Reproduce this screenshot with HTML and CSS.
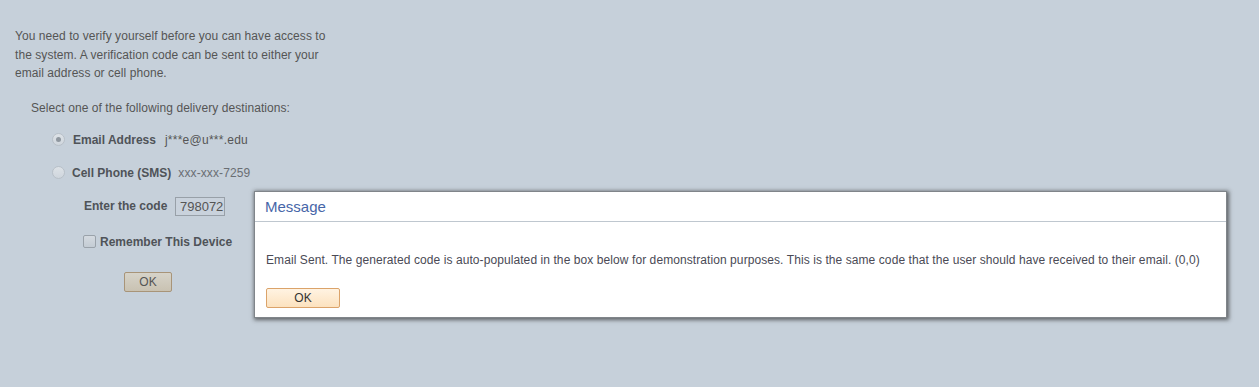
FILE: index.html
```html
<!DOCTYPE html>
<html>
<head>
<meta charset="utf-8">
<link rel="stylesheet" href="styles.css">
</head>
<body>
<div class="page">
  <p class="intro">You need to verify yourself before you can have access to the system. A verification code can be sent to either your email address or cell phone.</p>
  <div class="select">Select one of the following delivery destinations:</div>
  <div class="opt opt1">
    <span class="radio checked"><span class="dot"></span></span>
    <span class="lbl">Email Address</span>
    <span class="val">j***e@u***.edu</span>
  </div>
  <div class="opt opt2">
    <span class="radio"></span>
    <span class="lbl">Cell Phone (SMS)</span>
    <span class="val small">xxx-xxx-7259</span>
  </div>
  <div class="code-row">
    <span class="lbl">Enter the code</span>
    <span class="codebox">798072</span>
  </div>
  <div class="remember">
    <span class="check"></span>
    <span class="lbl">Remember This Device</span>
  </div>
  <div class="ok-row"><span class="btn-ok">OK</span></div>
</div>

<div class="modal">
  <div class="modal-head">Message</div>
  <div class="modal-body">
    <div class="modal-text">Email Sent. The generated code is auto-populated in the box below for demonstration purposes. This is the same code that the user should have received to their email. (0,0)</div>
    <span class="btn-modal">OK</span>
  </div>
</div>
</body>
</html>
```
FILE: styles.css
```css
html, body {
  margin: 0;
  padding: 0;
  background: #c6d0da;
  width: 1259px;
  height: 387px;
  overflow: hidden;
  font-family: Arial, "Liberation Sans", sans-serif;
  font-size: 12px;
  color: #555;
}
.page {
  padding: 27px 0 0 15px;
}
.intro {
  margin: 0;
  width: 320px;
  line-height: 18.5px;
  letter-spacing: 0.06px;
}
.select {
  margin: 17px 0 0 16px;
  line-height: 16px;
  letter-spacing: 0.07px;
}
.opt {
  display: flex;
  align-items: center;
  height: 16px;
}
.opt1 { margin: 16px 0 0 37px; }
.opt2 { margin: 17px 0 0 37px; }
.radio {
  width: 11px;
  height: 11px;
  border-radius: 50%;
  border: 1px solid #b8c0c8;
  background: linear-gradient(#dde2e7, #cfd6dd);
  display: flex;
  align-items: center;
  justify-content: center;
  margin-right: 8px;
}
.opt2 .radio { margin-right: 7px; }
.radio .dot {
  width: 5px;
  height: 5px;
  border-radius: 50%;
  background: #8f979f;
}
.lbl {
  font-weight: bold;
  color: #4f5358;
}
.val {
  margin-left: 9px;
  color: #555;
  letter-spacing: 0.25px;
}
.val.small {
  font-size: 12px;
  margin-left: 7px;
  color: #6a6e73;
  letter-spacing: 0.1px;
}
.code-row {
  display: flex;
  align-items: center;
  margin: 16px 0 0 69px;
  height: 19px;
}
.codebox {
  margin-left: 8px;
  width: 47px;
  height: 17px;
  border: 1px solid #98a0a8;
  background: #c9d2dc;
  font-size: 13px;
  line-height: 18px;
  color: #555;
  text-align: right;
  padding-right: 1px;
  box-sizing: content-box;
}
.remember {
  display: flex;
  align-items: center;
  margin: 18px 0 0 68px;
  height: 16px;
}
.check {
  width: 11px;
  height: 11px;
  border: 1px solid #9aa2aa;
  border-radius: 2px;
  background: linear-gradient(#d4dae0, #c4ccd4);
  margin-right: 4px;
}
.ok-row {
  margin: 22px 0 0 109px;
}
.btn-ok {
  display: inline-block;
  width: 46px;
  height: 18px;
  line-height: 18px;
  text-align: center;
  border: 1px solid #a89478;
  border-radius: 2px;
  background: linear-gradient(#d6d3c9, #c9c2b2);
  color: #555;
}
.modal {
  position: absolute;
  left: 254px;
  top: 191px;
  width: 971px;
  height: 125px;
  background: #fff;
  border: 1px solid #80858a;
  box-shadow: 1px 1px 4px 1px rgba(40, 40, 40, 0.65);
}
.modal-head {
  height: 29px;
  line-height: 30px;
  padding-left: 10px;
  font-size: 15px;
  color: #4766a8;
  border-bottom: 1px solid #bfc7cf;
}
.modal-body {
  padding: 30px 0 0 11px;
}
.modal-text {
  color: #4a4a55;
  line-height: 16px;
  letter-spacing: 0.08px;
}
.btn-modal {
  display: inline-block;
  margin-top: 20px;
  width: 72px;
  height: 18px;
  line-height: 18px;
  text-align: center;
  font-size: 12px;
  color: #333;
  border: 1px solid #dba36a;
  border-radius: 2px;
  background: linear-gradient(#fff3e2, #fce2bf);
}
```
